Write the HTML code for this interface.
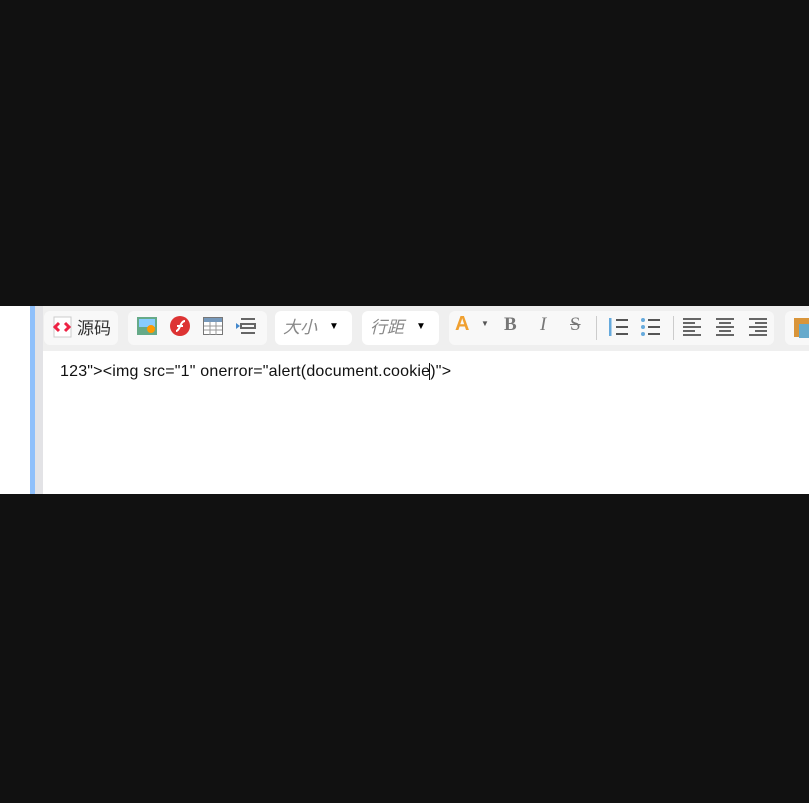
<!DOCTYPE html>
<html><head><meta charset="utf-8"><style>
body{margin:0;width:809px;height:803px;background:#111;position:relative;overflow:hidden;font-family:"Liberation Sans","Noto Sans CJK SC",sans-serif}
#band{position:absolute;left:0;top:306px;width:809px;height:188px;background:#fff}
#blue{position:absolute;left:30px;top:306px;width:5px;height:188px;background:#8fc0fb}
#gray{position:absolute;left:35px;top:306px;width:8px;height:188px;background:#e3e3e6}
#tb{position:absolute;left:43px;top:306px;width:766px;height:45px;background:#efefef}
.g{position:absolute;top:5px;height:34px;background:#f8f8f8;border-radius:6px}
.t{position:absolute;font-size:17px;color:#333}
.i{position:absolute;font-size:17px;color:#888;font-style:italic}
#txt{position:absolute;left:60px;top:363px;font-size:16px;color:#111;letter-spacing:0.2px}
</style></head><body>
<div id="band"></div><div id="blue"></div><div id="gray"></div>
<div id="tb">
<div class="g" style="left:1px;width:74px"></div>
<div class="g" style="left:85px;width:139px"></div>
<div class="g" style="left:232px;width:77px;background:#fff"></div>
<div class="g" style="left:319px;width:77px;background:#fff"></div>
<div class="g" style="left:406px;width:325px"></div>
<div class="g" style="left:742px;width:40px"></div>
<svg style="position:absolute;left:10px;top:10px" width="20" height="22"><rect x="1" y="1" width="17" height="20" fill="#fff" stroke="#ccc"/><path d="M6 7l-4 4 4 4M12 7l4 4-4 4" stroke="#e24" stroke-width="3" fill="none"/></svg>
<span class="t" style="left:34px;top:8px">源码</span>
<svg style="position:absolute;left:94px;top:11px" width="20" height="18"><rect width="20" height="18" fill="#6a8"/><rect x="2" y="2" width="16" height="8" fill="#8cf"/><circle cx="14" cy="12" r="4" fill="#f90"/></svg>
<svg style="position:absolute;left:126px;top:9px" width="22" height="22"><circle cx="11" cy="11" r="10" fill="#d33"/><path d="M7 16c4 0 4-10 9-10M8 11h6" stroke="#fff" stroke-width="2" fill="none"/></svg>
<svg style="position:absolute;left:160px;top:11px" width="20" height="18"><rect x=".5" y=".5" width="19" height="17" fill="#fff" stroke="#777"/><rect x="1" y="1" width="18" height="4" fill="#79b"/><path d="M1 9h18M1 13h18M7 5v13M13 5v13" stroke="#999"/></svg>
<svg style="position:absolute;left:193px;top:11px" width="22" height="18"><path d="M5 2h14M5 7h14v4H5zM5 16h14" stroke="#666" stroke-width="2" fill="none"/><path d="M0 6l4 3-4 3z" fill="#48c"/></svg>
<span class="i" style="left:240px;top:7px">大小</span><span style="position:absolute;left:286px;top:15px;font-size:10px">▼</span>
<span class="i" style="left:327px;top:7px">行距</span><span style="position:absolute;left:373px;top:15px;font-size:10px">▼</span>
<span style="position:absolute;left:412px;top:7px;font-size:20px;font-weight:bold;color:#f0a030">A</span>
<span style="position:absolute;left:438px;top:13px;font-size:8px;color:#555">▼</span>
<span style="position:absolute;left:461px;top:8px;font-size:19px;font-weight:bold;color:#777;font-family:'Liberation Serif'">B</span>
<span style="position:absolute;left:497px;top:8px;font-size:19px;font-style:italic;color:#777;font-family:'Liberation Serif'">I</span>
<span style="position:absolute;left:527px;top:8px;font-size:19px;color:#777;text-decoration:line-through;font-family:'Liberation Serif'">S</span>
<div style="position:absolute;left:553px;top:10px;width:1px;height:24px;background:#ccc"></div>
<svg style="position:absolute;left:566px;top:11px" width="20" height="20"><path d="M7 3h12M7 10h12M7 17h12" stroke="#555" stroke-width="2"/><path d="M1 1v18" stroke="#6ad" stroke-width="3"/></svg>
<svg style="position:absolute;left:598px;top:11px" width="20" height="20"><path d="M7 3h12M7 10h12M7 17h12" stroke="#555" stroke-width="2"/><circle cx="2" cy="3" r="2" fill="#6ad"/><circle cx="2" cy="10" r="2" fill="#6ad"/><circle cx="2" cy="17" r="2" fill="#6ad"/></svg>
<div style="position:absolute;left:630px;top:10px;width:1px;height:24px;background:#ccc"></div>
<svg style="position:absolute;left:640px;top:11px" width="20" height="20"><path d="M0 2h18M0 6h12M0 10h18M0 14h12M0 18h18" stroke="#666" stroke-width="2"/></svg>
<svg style="position:absolute;left:672px;top:11px" width="20" height="20"><path d="M1 2h18M4 6h12M1 10h18M4 14h12M1 18h18" stroke="#666" stroke-width="2"/></svg>
<svg style="position:absolute;left:705px;top:11px" width="20" height="20"><path d="M1 2h18M7 6h12M1 10h18M7 14h12M1 18h18" stroke="#666" stroke-width="2"/></svg>
<svg style="position:absolute;left:750px;top:9px" width="20" height="24"><rect x="1" y="3" width="16" height="19" fill="#d9953a"/><rect x="6" y="9" width="14" height="14" fill="#6ac"/></svg>
</div>
<div id="txt">123"&gt;&lt;img src="1" onerror="alert(document.cookie<span style="border-left:1px solid #111;margin-left:-1px"></span>)"&gt;</div>
</body></html>
